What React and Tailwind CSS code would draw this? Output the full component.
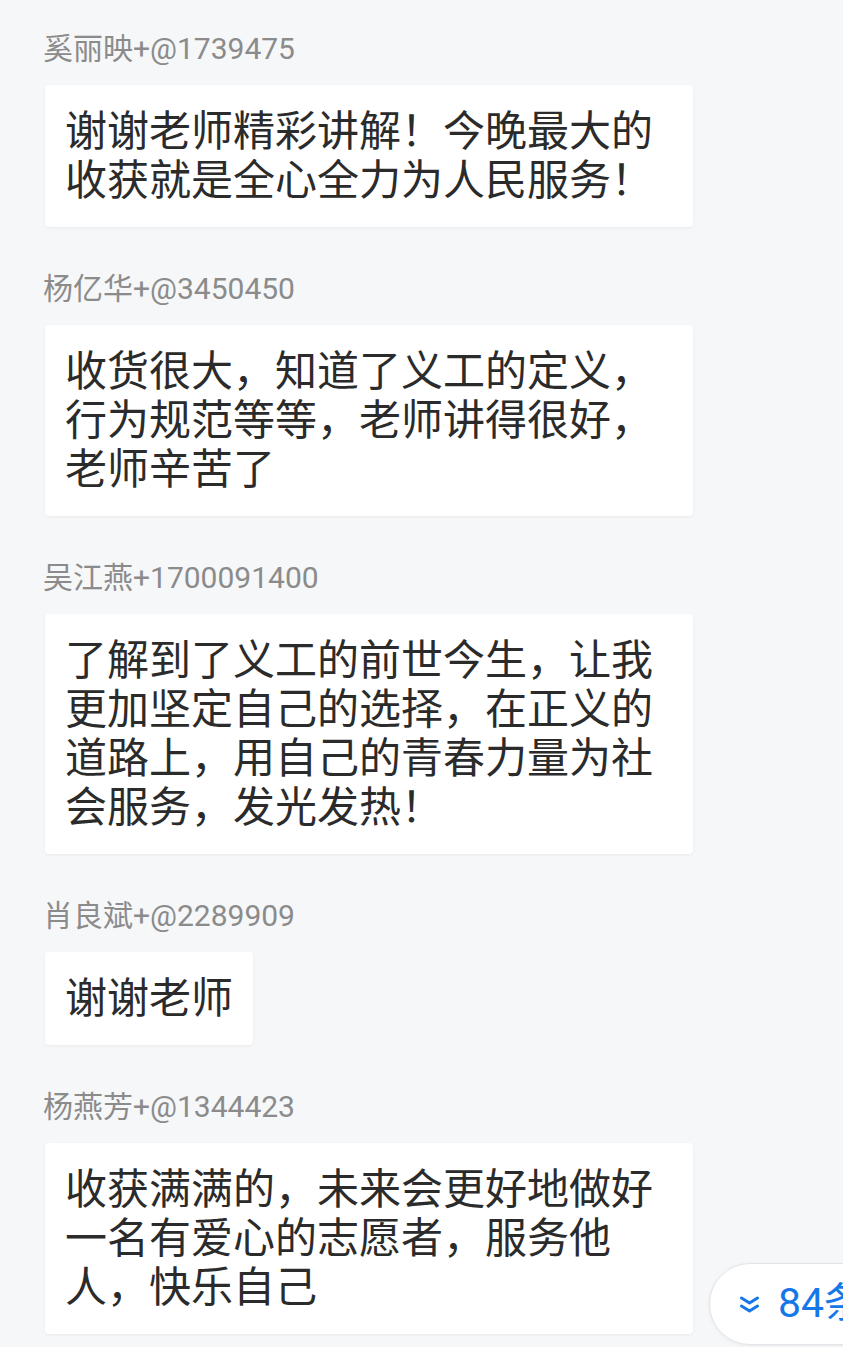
import React from 'react';

const messages = [
  { name: '奚丽映+@1739475', text: '谢谢老师精彩讲解！今晚最大的收获就是全心全力为人民服务！' },
  { name: '杨亿华+@3450450', text: '收货很大，知道了义工的定义，行为规范等等，老师讲得很好，老师辛苦了' },
  { name: '吴江燕+1700091400', text: '了解到了义工的前世今生，让我更加坚定自己的选择，在正义的道路上，用自己的青春力量为社会服务，发光发热！' },
  { name: '肖良斌+@2289909', text: '谢谢老师' },
  { name: '杨燕芳+@1344423', text: '收获满满的，未来会更好地做好一名有爱心的志愿者，服务他人，快乐自己' },
];

const Message = ({ name, text }) => (
  <div className="flex flex-col items-start">
    <div className="pl-[43px] text-[30px] leading-[36px] text-[#8b8b8b]">{name}</div>
    <div className="ml-[45px] mt-[18px] max-w-[648px] rounded-[4px] bg-white px-[20px] py-[22px] text-[42px] leading-[49px] text-[#2b2b2b] shadow-[0_1px_3px_rgba(0,0,0,0.06)]">
      {text}
    </div>
  </div>
);

export default function App() {
  return (
    <div
      className="relative h-[1347px] w-[843px] overflow-hidden bg-[#f6f7f9]"
      style={{ fontFamily: 'Roboto, "Noto Sans CJK SC", sans-serif' }}
    >
      <div className="flex flex-col gap-[44px] pt-[31px]">
        {messages.map((m) => (
          <Message key={m.name} {...m} />
        ))}
      </div>

      {/* New messages pill */}
      <div className="absolute left-[709px] top-[1263px] flex h-[82px] w-[220px] items-center gap-[18px] rounded-full border border-[#e2e4e8] bg-white pl-[29px] text-[41px] text-[#1677e8] shadow-[0_1px_4px_rgba(0,0,0,0.05)]">
        <svg className="shrink-0" width="21" height="17" viewBox="0 0 21 17" fill="none" stroke="currentColor" strokeWidth="3" strokeLinecap="round" strokeLinejoin="round">
          <path d="M2.5 2l8 5 8-5" />
          <path d="M2.5 10l8 5 8-5" />
        </svg>
        <span className="shrink-0 whitespace-nowrap">84条</span>
      </div>
    </div>
  );
}
